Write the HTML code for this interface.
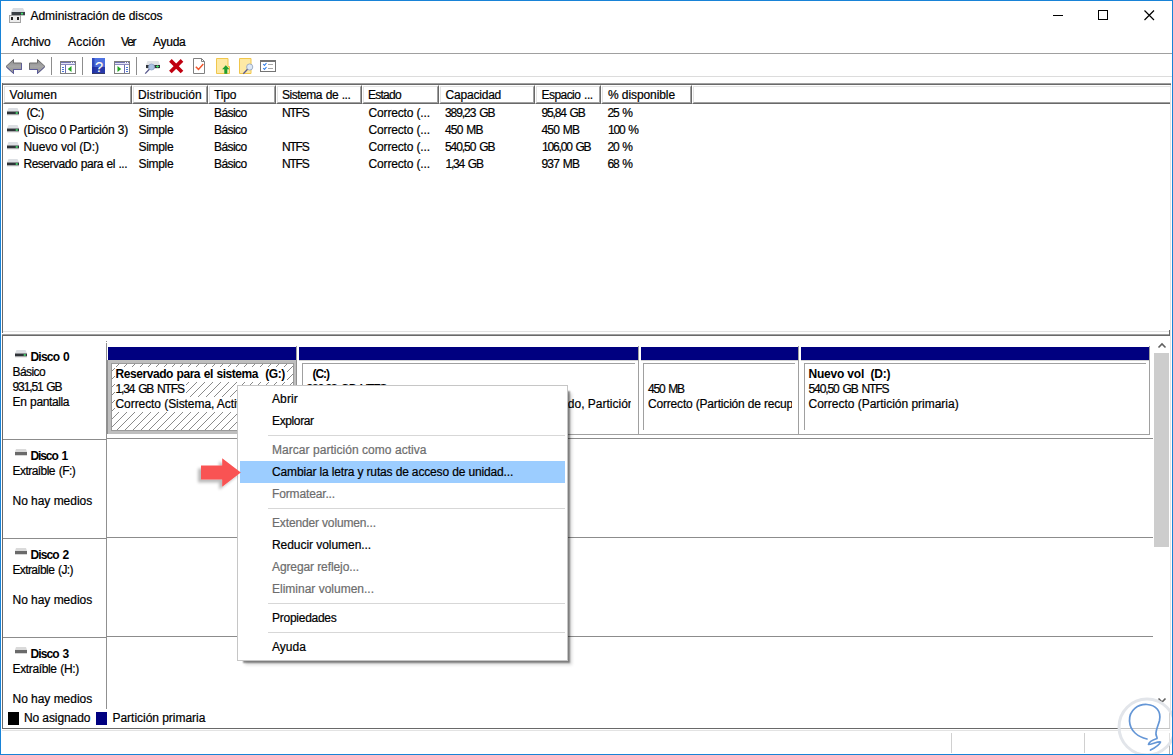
<!DOCTYPE html>
<html lang="es">
<head>
<meta charset="utf-8">
<title>Administración de discos</title>
<style>
html,body{margin:0;padding:0;}
body{width:1173px;height:755px;overflow:hidden;background:#fff;font-family:"Liberation Sans",sans-serif;font-size:12px;color:#000;position:relative;}
.abs{position:absolute;}
.t{position:absolute;white-space:pre;line-height:14px;height:14px;-webkit-text-stroke:0.2px currentColor;}
.b{font-weight:bold;-webkit-text-stroke:0;}
.hl{position:absolute;height:1px;}
.vl{position:absolute;width:1px;}
#frame{position:absolute;left:0;top:0;width:1171px;height:753px;border:1px solid #1883d7;pointer-events:none;z-index:50;}
.hc{position:absolute;top:85px;height:19px;border-top:1px solid #fff;border-left:1px solid #fff;border-right:1px solid #696969;border-bottom:1px solid #696969;box-sizing:border-box;}
.hc::after{content:"";position:absolute;left:0;top:0;right:0;bottom:0;border-top:1px solid #e3e3e3;border-left:1px solid #e3e3e3;border-right:1px solid #a0a0a0;border-bottom:1px solid #a0a0a0;}
#ctx{position:absolute;left:237px;top:385px;width:331px;height:276px;box-sizing:border-box;border:1px solid #c6c6c6;background:#fff;box-shadow:4px 4px 1.500px -2px rgba(0,0,0,.42),6px 6px 3px -2px rgba(0,0,0,.14);z-index:20;}
#ctx .t{line-height:22px;height:22px;}
#ctx .dis{color:#6d6d6d;}
#ctx .sep{position:absolute;left:30px;width:297px;height:1px;background:#d7d7d7;}
#ctx .sel{position:absolute;left:2px;width:325px;height:22px;background:#9ccdff;}
.hc.last{border-right:none;}
.hc.last::after{border-right:none;}
.part{position:absolute;top:363px;height:67px;border-left:1px solid #a0a0a0;border-top:1px solid #a0a0a0;box-sizing:border-box;overflow:hidden;}
</style>
</head>
<body>
<!-- title bar -->
<svg class="abs" style="left:9px;top:7px" width="18" height="17" viewBox="0 0 18 17">
  <path d="M4 1h10l2 4H2z" fill="#d9dde2"/>
  <rect x="2.500" y="5" width="13.500" height="3.300" fill="#3a3f45"/>
  <rect x="12" y="5.800" width="2" height="1.700" fill="#3fe06a"/>
  <rect x="0.5" y="8.5" width="11" height="7" fill="#ececec" stroke="#a2a2a2"/>
  <rect x="2" y="10" width="2" height="3" fill="#222"/>
  <rect x="8" y="10" width="2" height="3" fill="#222"/>
</svg>
<div class="t" style="left:30.5px;top:9px;letter-spacing:-0.03px;">Administración de discos</div>
<svg class="abs" style="left:1040px;top:0" width="132" height="30" viewBox="0 0 132 30">
  <path d="M13 15.500h10" stroke="#000" stroke-width="1" fill="none"/>
  <rect x="58.5" y="10.5" width="9" height="9" stroke="#000" stroke-width="1" fill="none"/>
  <path d="M104.500 10.500l9.500 9.500M114 10.500l-9.500 9.500" stroke="#000" stroke-width="1.200" fill="none"/>
</svg>

<!-- menu bar -->
<div class="t" style="left:11.5px;top:35px;letter-spacing:-0.12px;">Archivo</div>
<div class="t" style="left:68.0px;top:35px;letter-spacing:0.19px;">Acción</div>
<div class="t" style="left:121.0px;top:35px;letter-spacing:-1.20px;">Ver</div>
<div class="t" style="left:153.0px;top:35px;letter-spacing:-0.26px;">Ayuda</div>
<div class="hl" style="left:1px;top:53px;width:1171px;background:#a0a0a0"></div>
<div class="hl" style="left:1px;top:76px;width:1171px;background:#dcdcdc"></div>

<!-- toolbar -->
<svg class="abs" style="left:0;top:54px" width="300" height="24" viewBox="0 54 300 24">
  <defs>
    <linearGradient id="ga" x1="0" y1="0" x2="0" y2="1"><stop offset="0" stop-color="#8a8a8a"/><stop offset=".5" stop-color="#a6a6a6"/><stop offset="1" stop-color="#8e8e8e"/></linearGradient>
    <linearGradient id="gq" x1="0" y1="0" x2="0" y2="1"><stop offset="0" stop-color="#4f74e4"/><stop offset=".55" stop-color="#4a6ad8"/><stop offset=".56" stop-color="#2636a6"/><stop offset="1" stop-color="#2a3cae"/></linearGradient>
  </defs>
  <!-- back / forward -->
  <path d="M6 66.500L13.500 59.500V63H21.500V69.500H13.500V73.500Z" fill="url(#ga)" stroke="#6c6c6c" stroke-width="1" stroke-linejoin="round"/>
  <path d="M21.500 63.500V69.500H13.500V73.500L6.500 67" fill="none" stroke="#5c5c9c" stroke-width="1"/>
  <path d="M45 66.500L37.500 59.500V63H29.500V69.500H37.500V73.500Z" fill="url(#ga)" stroke="#6c6c6c" stroke-width="1" stroke-linejoin="round"/>
  <path d="M29.500 69.500H37.500V73.500L44.500 67" fill="none" stroke="#5c5c9c" stroke-width="1"/>
  <rect x="51" y="57" width="1" height="18" fill="#8d8d8d"/>
  <!-- show/hide tree -->
  <rect x="60.500" y="61.500" width="15" height="12" fill="#fff" stroke="#808080"/>
  <rect x="61" y="62" width="14" height="1" fill="#7474b4"/><rect x="61" y="63" width="14" height="1" fill="#e4e4f4"/><rect x="61" y="64" width="14" height="1" fill="#8a8ac0"/>
  <rect x="71" y="62" width="1" height="1" fill="#fff"/><rect x="73" y="62" width="1" height="1" fill="#fff"/>
  <rect x="62" y="67" width="2" height="1" fill="#4a76d8"/><rect x="62" y="69" width="2" height="1" fill="#4a76d8"/><rect x="62" y="71" width="2" height="1" fill="#4a76d8"/>
  <rect x="65" y="65" width="1" height="8" fill="#6c6cae"/>
  <path d="M71.500 66v6l-3.700-3z" fill="#23a523"/>
  <rect x="82" y="57" width="1" height="18" fill="#8d8d8d"/>
  <!-- help -->
  <rect x="92" y="58" width="13" height="16" fill="url(#gq)"/>
  <rect x="92" y="58" width="2.500" height="16" fill="#1c2c9c" opacity=".55"/>
  <rect x="92" y="73" width="13" height="1" fill="#3a3a4a" opacity=".7"/>
  <text x="99.600" y="72" font-family="Liberation Sans, sans-serif" font-size="14.500" fill="#8a8a9a" text-anchor="middle">?</text>
  <text x="99" y="71.500" font-family="Liberation Sans, sans-serif" font-size="14.500" fill="#fff" text-anchor="middle">?</text>
  <!-- action pane -->
  <rect x="114.500" y="61.500" width="15" height="12" fill="#fff" stroke="#808080"/>
  <rect x="115" y="62" width="14" height="1" fill="#7474b4"/><rect x="115" y="63" width="14" height="1" fill="#e4e4f4"/><rect x="115" y="64" width="14" height="1" fill="#8a8ac0"/>
  <rect x="125" y="62" width="1" height="1" fill="#fff"/><rect x="127" y="62" width="1" height="1" fill="#fff"/>
  <rect x="124" y="65" width="1" height="8" fill="#6c6cae"/>
  <rect x="126" y="67" width="2" height="1" fill="#4a76d8"/><rect x="126" y="69" width="2" height="1" fill="#4a76d8"/><rect x="126" y="71" width="2" height="1" fill="#4a76d8"/>
  <path d="M117.500 66v6l3.700-3z" fill="#23a523"/>
  <rect x="136" y="57" width="1" height="18" fill="#8d8d8d"/>
  <!-- drive with magnifier -->
  <path d="M147.500 61h11l1.500 4h-14z" fill="#dfe2e6"/>
  <rect x="146" y="65" width="14" height="3" fill="#2f3338"/>
  <rect x="156" y="66" width="3" height="1" fill="#3fe06a"/><rect x="157" y="65.300" width="1" height="2.400" fill="#3fe06a"/>
  <rect x="146.500" y="68" width="13" height="1" fill="#cfcfcf" opacity=".7"/>
  <circle cx="151.500" cy="67" r="3" fill="#a9c2e2" stroke="#8aa0c8" stroke-width=".8"/>
  <path d="M149.300 69.300L145.200 73.600" stroke="#5a5a8e" stroke-width="1.300"/>
  <!-- red X -->
  <path d="M170.400 60.400L182 72M182 60.400L170.400 72" stroke="#c00010" stroke-width="3.700"/>
  <!-- doc with check -->
  <path d="M193.500 58.500h8l3 3v12h-11z" fill="#fff" stroke="#808080"/>
  <path d="M201.500 58.500v3h3" fill="none" stroke="#808080"/>
  <path d="M195.800 66.800l2.700 2.600l4.800-5.300" fill="none" stroke="#f0562c" stroke-width="1.500"/>
  <!-- yellow page up arrow -->
  <path d="M216.500 58.500h11.500v8h1.500v7h-13z" fill="#fde9a4" stroke="#f0c64c"/>
  <path d="M225.800 65.300l3.700 4h-2.200v4.500h-3v-4.500h-2.200z" fill="#1f9e2f"/>
  <!-- yellow page magnifier -->
  <path d="M239.500 58.500h11.500v15h-11.500z" fill="#fde9a4" stroke="#f0c64c"/>
  <circle cx="249.700" cy="67" r="3.100" fill="#dce8f6" stroke="#9aa8c0" stroke-width=".9"/>
  <path d="M247.500 69.300L243.300 73.700" stroke="#5a5a8e" stroke-width="1.300"/>
  <!-- checklist -->
  <rect x="260.500" y="60.500" width="15" height="11" fill="#fff" stroke="#747474"/>
  <rect x="260" y="60" width="16" height="2" fill="#747474"/>
  <path d="M263.200 64l1.300 1.400l2-2.400M263.200 68l1.300 1.400l2-2.400" fill="none" stroke="#2f7de8" stroke-width="1.100"/>
  <rect x="268" y="64" width="5" height="1" fill="#a8a8a8"/><rect x="268" y="68" width="5" height="1" fill="#a8a8a8"/>
</svg>

<!-- upper list pane -->
<div class="hl" style="left:2px;top:83px;width:1169px;background:#a0a0a0"></div>
<div class="hl" style="left:2px;top:84px;width:1169px;background:#696969"></div>
<div class="vl" style="left:2px;top:83px;height:250px;background:#696969"></div>
<div class="hl" style="left:3px;top:331px;width:1167px;background:#e3e3e3"></div>
<div class="hl" style="left:2px;top:334px;width:1168px;background:#a0a0a0"></div>
<div class="hl" style="left:2px;top:335px;width:1168px;background:#696969"></div>
<div class="vl" style="left:1169px;top:330px;height:6px;background:#696969"></div>
<div class="hc" style="left:3px;width:129px"></div>
<div class="hc" style="left:132px;width:76px"></div>
<div class="hc" style="left:208px;width:68px"></div>
<div class="hc" style="left:276px;width:86px"></div>
<div class="hc" style="left:362px;width:77px"></div>
<div class="hc" style="left:439px;width:96px"></div>
<div class="hc" style="left:535px;width:66px"></div>
<div class="hc" style="left:601px;width:91px"></div>
<div class="hc last" style="left:692px;width:478px;"></div>
<div class="t" style="left:9.5px;top:88px;letter-spacing:0.13px;">Volumen</div>
<div class="t" style="left:138.0px;top:88px;letter-spacing:0.10px;">Distribución</div>
<div class="t" style="left:214.0px;top:88px;letter-spacing:-0.14px;">Tipo</div>
<div class="t" style="left:282.0px;top:88px;word-spacing:0.77px;letter-spacing:-0.47px;">Sistema de ...</div>
<div class="t" style="left:368.0px;top:88px;letter-spacing:-0.76px;">Estado</div>
<div class="t" style="left:445.5px;top:88px;letter-spacing:-0.20px;">Capacidad</div>
<div class="t" style="left:541.5px;top:88px;word-spacing:0.99px;letter-spacing:-0.55px;">Espacio ...</div>
<div class="t" style="left:608.0px;top:88px;letter-spacing:-0.09px;">% disponible</div>

<!-- rows -->
<svg class="abs" style="left:6px;top:108px" width="14" height="62" viewBox="0 0 14 62">
  <defs><g id="drv"><path d="M2.500 0h9l1.500 3.500H1z" fill="#dcdfe3"/><rect x="1" y="3.500" width="12" height="3" fill="#2f3338"/><rect x="9.500" y="4.500" width="2.500" height="1" fill="#46d66e"/><rect x="10.300" y="4" width="1" height="2" fill="#46d66e"/><rect x="1" y="6.500" width="12" height="1" fill="#c9c9c9" opacity=".7"/></g></defs>
  <use href="#drv" y="0"/><use href="#drv" y="17"/><use href="#drv" y="34"/><use href="#drv" y="51"/>
</svg>
<div class="t" style="left:26.5px;top:106px;letter-spacing:-0.77px;">(C:)</div>
<div class="t" style="left:23.5px;top:123px;letter-spacing:-0.17px;">(Disco 0 Partición 3)</div>
<div class="t" style="left:23.5px;top:140px;letter-spacing:-0.10px;">Nuevo vol (D:)</div>
<div class="t" style="left:23.5px;top:157px;word-spacing:0.81px;letter-spacing:-0.49px;">Reservado para el ...</div>
<div class="t" style="left:138.5px;top:106px;letter-spacing:-0.32px;">Simple</div><div class="t" style="left:138.5px;top:123px;letter-spacing:-0.32px;">Simple</div><div class="t" style="left:138.5px;top:140px;letter-spacing:-0.32px;">Simple</div><div class="t" style="left:138.5px;top:157px;letter-spacing:-0.32px;">Simple</div>
<div class="t" style="left:214.0px;top:106px;letter-spacing:-0.57px;">Básico</div><div class="t" style="left:214.0px;top:123px;letter-spacing:-0.57px;">Básico</div><div class="t" style="left:214.0px;top:140px;letter-spacing:-0.57px;">Básico</div><div class="t" style="left:214.0px;top:157px;letter-spacing:-0.57px;">Básico</div>
<div class="t" style="left:282.0px;top:106px;letter-spacing:-1.20px;">NTFS</div><div class="t" style="left:282.0px;top:140px;letter-spacing:-1.20px;">NTFS</div><div class="t" style="left:282.0px;top:157px;letter-spacing:-1.20px;">NTFS</div>
<div class="t" style="left:368.5px;top:106px;letter-spacing:-0.15px;">Correcto (...</div><div class="t" style="left:368.5px;top:123px;letter-spacing:-0.15px;">Correcto (...</div><div class="t" style="left:368.5px;top:140px;letter-spacing:-0.15px;">Correcto (...</div><div class="t" style="left:368.5px;top:157px;letter-spacing:-0.15px;">Correcto (...</div>
<div class="t" style="left:445.0px;top:106px;word-spacing:1.60px;letter-spacing:-1.06px;">389,23 GB</div><div class="t" style="left:445.0px;top:123px;word-spacing:1.25px;letter-spacing:-0.82px;">450 MB</div><div class="t" style="left:445.0px;top:140px;word-spacing:1.60px;letter-spacing:-1.06px;">540,50 GB</div><div class="t" style="left:445.5px;top:157px;word-spacing:1.60px;letter-spacing:-1.20px;">1,34 GB</div>
<div class="t" style="left:541.5px;top:106px;word-spacing:1.60px;letter-spacing:-1.14px;">95,84 GB</div><div class="t" style="left:541.5px;top:123px;word-spacing:1.30px;letter-spacing:-0.85px;">450 MB</div><div class="t" style="left:542.0px;top:140px;word-spacing:1.60px;letter-spacing:-1.17px;">106,00 GB</div><div class="t" style="left:541.5px;top:157px;word-spacing:1.30px;letter-spacing:-0.85px;">937 MB</div>
<div class="t" style="left:607.5px;top:106px;word-spacing:1.60px;letter-spacing:-1.20px;">25 %</div><div class="t" style="left:608.0px;top:123px;word-spacing:1.60px;letter-spacing:-1.20px;">100 %</div><div class="t" style="left:607.5px;top:140px;word-spacing:1.60px;letter-spacing:-1.20px;">20 %</div><div class="t" style="left:607.5px;top:157px;word-spacing:1.60px;letter-spacing:-1.20px;">68 %</div>

<!-- lower graphical pane -->
<div class="vl" style="left:2px;top:336px;height:392px;background:#696969"></div>
<div class="vl" style="left:106px;top:343px;height:366px;background:#909090"></div>
<div class="abs" style="left:106px;top:341px;width:1px;height:1px;background:#909090"></div>
<div class="hl" style="left:3px;top:439px;width:103px;background:#8c8c8c"></div>
<div class="hl" style="left:106px;top:438px;width:1047px;background:#8c8c8c"></div>
<div class="hl" style="left:3px;top:538px;width:103px;background:#8c8c8c"></div>
<div class="hl" style="left:106px;top:537px;width:1047px;background:#8c8c8c"></div>
<div class="hl" style="left:3px;top:637px;width:103px;background:#8c8c8c"></div>
<div class="hl" style="left:106px;top:636px;width:1047px;background:#8c8c8c"></div>
<!-- disk labels -->
<svg class="abs" style="left:14px;top:350px" width="14" height="8"><use href="#drv"/></svg>
<div class="t b" style="left:30.5px;top:350px;word-spacing:1.29px;letter-spacing:-0.80px;">Disco 0</div>
<div class="t" style="left:12.5px;top:365px;letter-spacing:-0.59px;">Básico</div>
<div class="t" style="left:12.5px;top:380px;word-spacing:1.60px;letter-spacing:-1.11px;">931,51 GB</div>
<div class="t" style="left:12.5px;top:395px;word-spacing:0.68px;letter-spacing:-0.37px;">En pantalla</div>

<svg class="abs" style="left:14px;top:449px" width="14" height="8"><path d="M2 0h10l1 3H1z" fill="#dadada"/><rect x="1" y="3" width="12" height="3" fill="#6a6a6a"/><rect x="1" y="6" width="12" height="1" fill="#c4c4c4" opacity=".7"/></svg>
<div class="t b" style="left:30.5px;top:449px;word-spacing:1.60px;letter-spacing:-1.10px;">Disco 1</div>
<div class="t" style="left:12.5px;top:464px;word-spacing:1.04px;letter-spacing:-0.55px;">Extraíble (F:)</div>
<div class="t" style="left:12.5px;top:494px;letter-spacing:-0.03px;">No hay medios</div>

<svg class="abs" style="left:14px;top:548px" width="14" height="8"><path d="M2 0h10l1 3H1z" fill="#dadada"/><rect x="1" y="3" width="12" height="3" fill="#6a6a6a"/><rect x="1" y="6" width="12" height="1" fill="#c4c4c4" opacity=".7"/></svg>
<div class="t b" style="left:30.5px;top:548px;word-spacing:1.47px;letter-spacing:-0.91px;">Disco 2</div>
<div class="t" style="left:12.5px;top:563px;word-spacing:1.19px;letter-spacing:-0.63px;">Extraíble (J:)</div>
<div class="t" style="left:12.5px;top:593px;letter-spacing:-0.03px;">No hay medios</div>

<svg class="abs" style="left:14px;top:647px" width="14" height="8"><path d="M2 0h10l1 3H1z" fill="#dadada"/><rect x="1" y="3" width="12" height="3" fill="#6a6a6a"/><rect x="1" y="6" width="12" height="1" fill="#c4c4c4" opacity=".7"/></svg>
<div class="t b" style="left:30.5px;top:647px;word-spacing:1.47px;letter-spacing:-0.91px;">Disco 3</div>
<div class="t" style="left:12.5px;top:662px;word-spacing:0.67px;letter-spacing:-0.36px;">Extraíble (H:)</div>
<div class="t" style="left:12.5px;top:692px;letter-spacing:-0.03px;">No hay medios</div>

<!-- partitions: navy bars -->
<div class="abs" style="left:108px;top:347px;width:188px;height:13px;background:#000080"></div>
<div class="abs" style="left:299px;top:347px;width:339px;height:13px;background:#000080"></div>
<div class="abs" style="left:641px;top:347px;width:157px;height:13px;background:#000080"></div>
<div class="abs" style="left:801px;top:347px;width:348px;height:13px;background:#000080"></div>
<div class="vl" style="left:296px;top:346px;height:88px;background:#a0a0a0"></div>
<div class="vl" style="left:638px;top:346px;height:88px;background:#a0a0a0"></div>
<div class="vl" style="left:798px;top:346px;height:88px;background:#a0a0a0"></div>
<div class="vl" style="left:1149px;top:346px;height:88px;background:#a0a0a0"></div>
<div class="hl" style="left:297px;top:434px;width:853px;background:#a0a0a0"></div>

<div class="hl" style="left:299px;top:360px;width:339px;background:#d2d2d2"></div>
<div class="hl" style="left:641px;top:360px;width:157px;background:#d2d2d2"></div>
<div class="hl" style="left:801px;top:360px;width:348px;background:#d2d2d2"></div>
<!-- P1 selected with hatch -->
<div class="abs" style="left:107px;top:360px;width:190px;height:74px;box-sizing:border-box;background:#bebebe;border-left:1px solid #8f8f8f;border-right:1px solid #8f8f8f;"></div>
<div class="abs" style="left:111px;top:363px;width:183px;height:68px;box-sizing:border-box;background:#fff;border:1px solid #9a9a9a;"></div>
<svg class="abs" style="left:112px;top:364px" width="181" height="66" shape-rendering="crispEdges">
  <defs><pattern id="h" width="8" height="8" patternUnits="userSpaceOnUse" x="0" y="-1"><g fill="#8a8a8a"><rect x="7" y="0" width="1" height="1"/><rect x="6" y="1" width="1" height="1"/><rect x="5" y="2" width="1" height="1"/><rect x="4" y="3" width="1" height="1"/><rect x="3" y="4" width="1" height="1"/><rect x="2" y="5" width="1" height="1"/><rect x="1" y="6" width="1" height="1"/><rect x="0" y="7" width="1" height="1"/></g></pattern></defs>
  <rect width="181" height="66" fill="url(#h)"/>
</svg>
<div class="abs" style="left:112px;top:364px;width:181px;height:66px;overflow:hidden;">
<div class="t b" style="left:3.5px;top:3px;word-spacing:0.71px;letter-spacing:-0.44px;background:#fff;line-height:15px;height:15px;padding:0 2px 0 1px;margin-left:-1px;">Reservado para el sistema  (G:)</div>
<div class="t" style="left:3.5px;top:18px;word-spacing:1.60px;letter-spacing:-1.13px;background:#fff;line-height:15px;height:15px;padding:0 2px 0 1px;margin-left:-1px;">1,34 GB NTFS</div>
<div class="t" style="left:3.5px;top:33px;letter-spacing:-0.07px;background:#fff;line-height:15px;height:15px;padding:0 2px 0 1px;margin-left:-1px;">Correcto (Sistema, Activo, Partición primaria)</div>
</div>

<!-- P2 -->
<div class="part" style="left:302px;width:333px;">
<div class="t b" style="left:9.5px;top:3px;letter-spacing:-1.09px;">(C:)</div>
<div class="t" style="left:3.5px;top:18px;word-spacing:1.60px;letter-spacing:-1.10px;">389,23 GB NTFS</div>
<div class="t" style="left:2.0px;top:33px;width:326px;overflow:hidden;">Correcto (Arranque, Archivo de paginación, Volcado, Partición primaria)</div>
</div>
<!-- P3 -->
<div class="part" style="left:643px;width:152px;">
<div class="t" style="left:4.0px;top:18px;word-spacing:1.60px;letter-spacing:-1.20px;">450 MB</div>
<div class="t" style="left:4.0px;top:33px;letter-spacing:-0.18px;width:144px;overflow:hidden;">Correcto (Partición de recuperación)</div>
</div>
<!-- P4 -->
<div class="part" style="left:804px;width:342px;">
<div class="t b" style="left:3.5px;top:3px;letter-spacing:-0.19px;">Nuevo vol  (D:)</div>
<div class="t" style="left:3.5px;top:18px;word-spacing:1.60px;letter-spacing:-1.10px;">540,50 GB NTFS</div>
<div class="t" style="left:3.5px;top:33px;letter-spacing:-0.02px;">Correcto (Partición primaria)</div>
</div>

<!-- scrollbar -->
<div class="abs" style="left:1154px;top:353px;width:15px;height:194px;background:#cdcdcd"></div>
<svg class="abs" style="left:1157px;top:341px" width="10" height="8"><path d="M1.500 6.500l3.500-3.500l3.500 3.500" fill="none" stroke="#606060" stroke-width="1.600"/></svg>
<svg class="abs" style="left:1157px;top:697px" width="10" height="8"><path d="M1.500 1.500l3.500 3.500l3.500-3.500" fill="none" stroke="#606060" stroke-width="1.600"/></svg>

<!-- legend -->
<div class="abs" style="left:8px;top:712px;width:11px;height:13px;background:#000"></div>
<div class="t" style="left:24.0px;top:711px;letter-spacing:-0.10px;">No asignado</div>
<div class="abs" style="left:96px;top:712px;width:11px;height:13px;background:#000080"></div>
<div class="t" style="left:112.5px;top:711px;letter-spacing:-0.03px;">Partición primaria</div>

<!-- bottom border of lower pane + status bar -->
<div class="hl" style="left:2px;top:728px;width:1168px;background:#696969"></div>
<div class="hl" style="left:2px;top:730px;width:1168px;background:#e3e3e3"></div>
<div class="vl" style="left:1170px;top:85px;height:645px;background:#e3e3e3"></div>
<div class="vl" style="left:1169px;top:709px;height:19px;background:#8c8c8c"></div>
<div class="vl" style="left:1169px;top:733px;height:21px;background:#b0b0b0"></div>
<div class="vl" style="left:951px;top:733px;height:20px;background:#d0d0d0"></div>
<div class="vl" style="left:1084px;top:733px;height:20px;background:#d0d0d0"></div>

<!-- context menu -->
<div id="ctx">
  <div class="sel" style="top:75px"></div>
  <div class="t" style="left:34.0px;top:2px;letter-spacing:0.12px;">Abrir</div>
  <div class="t" style="left:34.0px;top:24px;letter-spacing:-0.37px;">Explorar</div>
  <div class="sep" style="top:49px"></div>
  <div class="t dis" style="left:34.0px;top:53px;letter-spacing:0.04px;">Marcar partición como activa</div>
  <div class="t" style="left:34.0px;top:75px;letter-spacing:-0.15px;">Cambiar la letra y rutas de acceso de unidad...</div>
  <div class="t dis" style="left:34.0px;top:97px;letter-spacing:-0.14px;">Formatear...</div>
  <div class="sep" style="top:122px"></div>
  <div class="t dis" style="left:34.0px;top:126px;letter-spacing:-0.15px;">Extender volumen...</div>
  <div class="t" style="left:34.0px;top:148px;letter-spacing:-0.05px;">Reducir volumen...</div>
  <div class="t dis" style="left:34.0px;top:170px;letter-spacing:-0.10px;">Agregar reflejo...</div>
  <div class="t dis" style="left:34.0px;top:192px;">Eliminar volumen...</div>
  <div class="sep" style="top:217px"></div>
  <div class="t" style="left:34.0px;top:221px;letter-spacing:-0.26px;">Propiedades</div>
  <div class="sep" style="top:246px"></div>
  <div class="t" style="left:34.0px;top:250px;">Ayuda</div>
</div>

<!-- red arrow -->
<svg class="abs" style="left:190px;top:450px;z-index:30" width="60" height="46" viewBox="190 450 60 46">
  <defs><filter id="sh" x="-20%" y="-20%" width="150%" height="150%"><feGaussianBlur in="SourceAlpha" stdDeviation="1.700"/><feOffset dx="-3.200" dy="3"/><feComponentTransfer><feFuncA type="linear" slope=".27"/></feComponentTransfer><feMerge><feMergeNode/><feMergeNode in="SourceGraphic"/></feMerge></filter></defs>
  <path d="M201 465.500h21.200v-7.200l18.600 14.200l-18.600 14.200v-7.200h-21.200z" fill="#f95353" filter="url(#sh)"/>
</svg>

<!-- watermark -->
<svg class="abs" style="left:1110px;top:690px;z-index:40" width="63" height="65" viewBox="1110 690 63 65">
  <circle cx="1147" cy="727" r="28" fill="#fff" fill-opacity=".6" stroke="#e2e5ea" stroke-width="3"/>
  <path d="M1147 739c-9-2-17-8-17.500-18c-.5-11 9-17 17.500-16.500c9 .5 14.500 7 12.500 16c-1.500 6-4 10-3.500 14c.3 2 1.500 3 1 4c-3 1-8 3-8.500 6c3 0 9-3 12-2.500c-1 3-6 6-10 8" fill="none" stroke="#6496d6" stroke-width="1.700" stroke-linecap="round" stroke-linejoin="round"/>
</svg>

<div id="frame"></div>

</body>
</html>
